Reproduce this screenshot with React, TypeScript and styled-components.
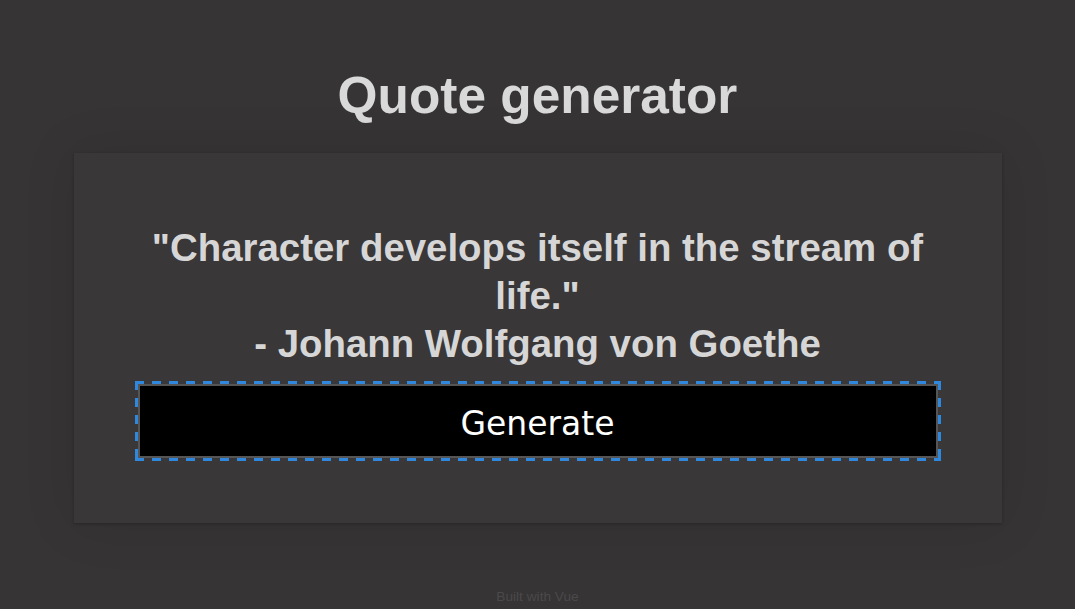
import React from "react";
import styled, { createGlobalStyle } from "styled-components";

const Global = createGlobalStyle`
  html, body { margin: 0; padding: 0; background: #363435; }
  body { font-family: "Liberation Sans", Arial, sans-serif; }
`;

const Page = styled.div`
  min-height: 609px;
  display: flex;
  flex-direction: column;
  align-items: center;
  padding-top: 67px;
  box-sizing: border-box;
`;

const Title = styled.h1`
  margin: 0;
  font-size: 51.4px;
  line-height: 56px;
  font-weight: 700;
  color: #d9d9d9;
`;

const Card = styled.div`
  margin-top: 30px;
  width: 928px;
  box-sizing: border-box;
  padding: 71px 64px 65px;
  background: #393738;
  box-shadow: 0 1px 3px rgba(0, 0, 0, 0.25), 0 0 50px rgba(0, 0, 0, 0.1);
  display: flex;
  flex-direction: column;
  align-items: stretch;
`;

const Quote = styled.p`
  margin: 0;
  font-size: 38.4px;
  line-height: 48px;
  font-weight: 700;
  color: #d6d6d6;
  text-align: center;
`;

const dashH = "repeating-linear-gradient(90deg, #2f87de 0 9px, transparent 9px 17px)";
const dashV = "repeating-linear-gradient(180deg, #2f87de 0 9px, transparent 9px 17px)";

const Button = styled.button`
  position: relative;
  margin-top: 16px;
  height: 74px;
  padding: 5px 0 0;
  background: #000;
  border: 2px solid #555;
  color: #fff;
  font-family: "DejaVu Sans", sans-serif;
  font-size: 33px;
  outline: none;
  cursor: pointer;

  &::after {
    content: "";
    position: absolute;
    inset: -5px;
    pointer-events: none;
    background:
      ${dashH} top left / 100% 3px no-repeat,
      ${dashH} bottom left / 100% 3px no-repeat,
      ${dashV} top left / 3px 100% no-repeat,
      ${dashV} top right / 3px 100% no-repeat;
  }
`;

const Footer = styled.div`
  margin-top: 66px;
  font-size: 13.7px;
  color: #4b494a;
`;

export default function App() {
  return (
    <>
      <Global />
      <Page>
        <Title>Quote generator</Title>
        <Card>
          <Quote>
            "Character develops itself in the stream of life."
            <br />- Johann Wolfgang von Goethe
          </Quote>
          <Button>Generate</Button>
        </Card>
        <Footer>Built with Vue</Footer>
      </Page>
    </>
  );
}
